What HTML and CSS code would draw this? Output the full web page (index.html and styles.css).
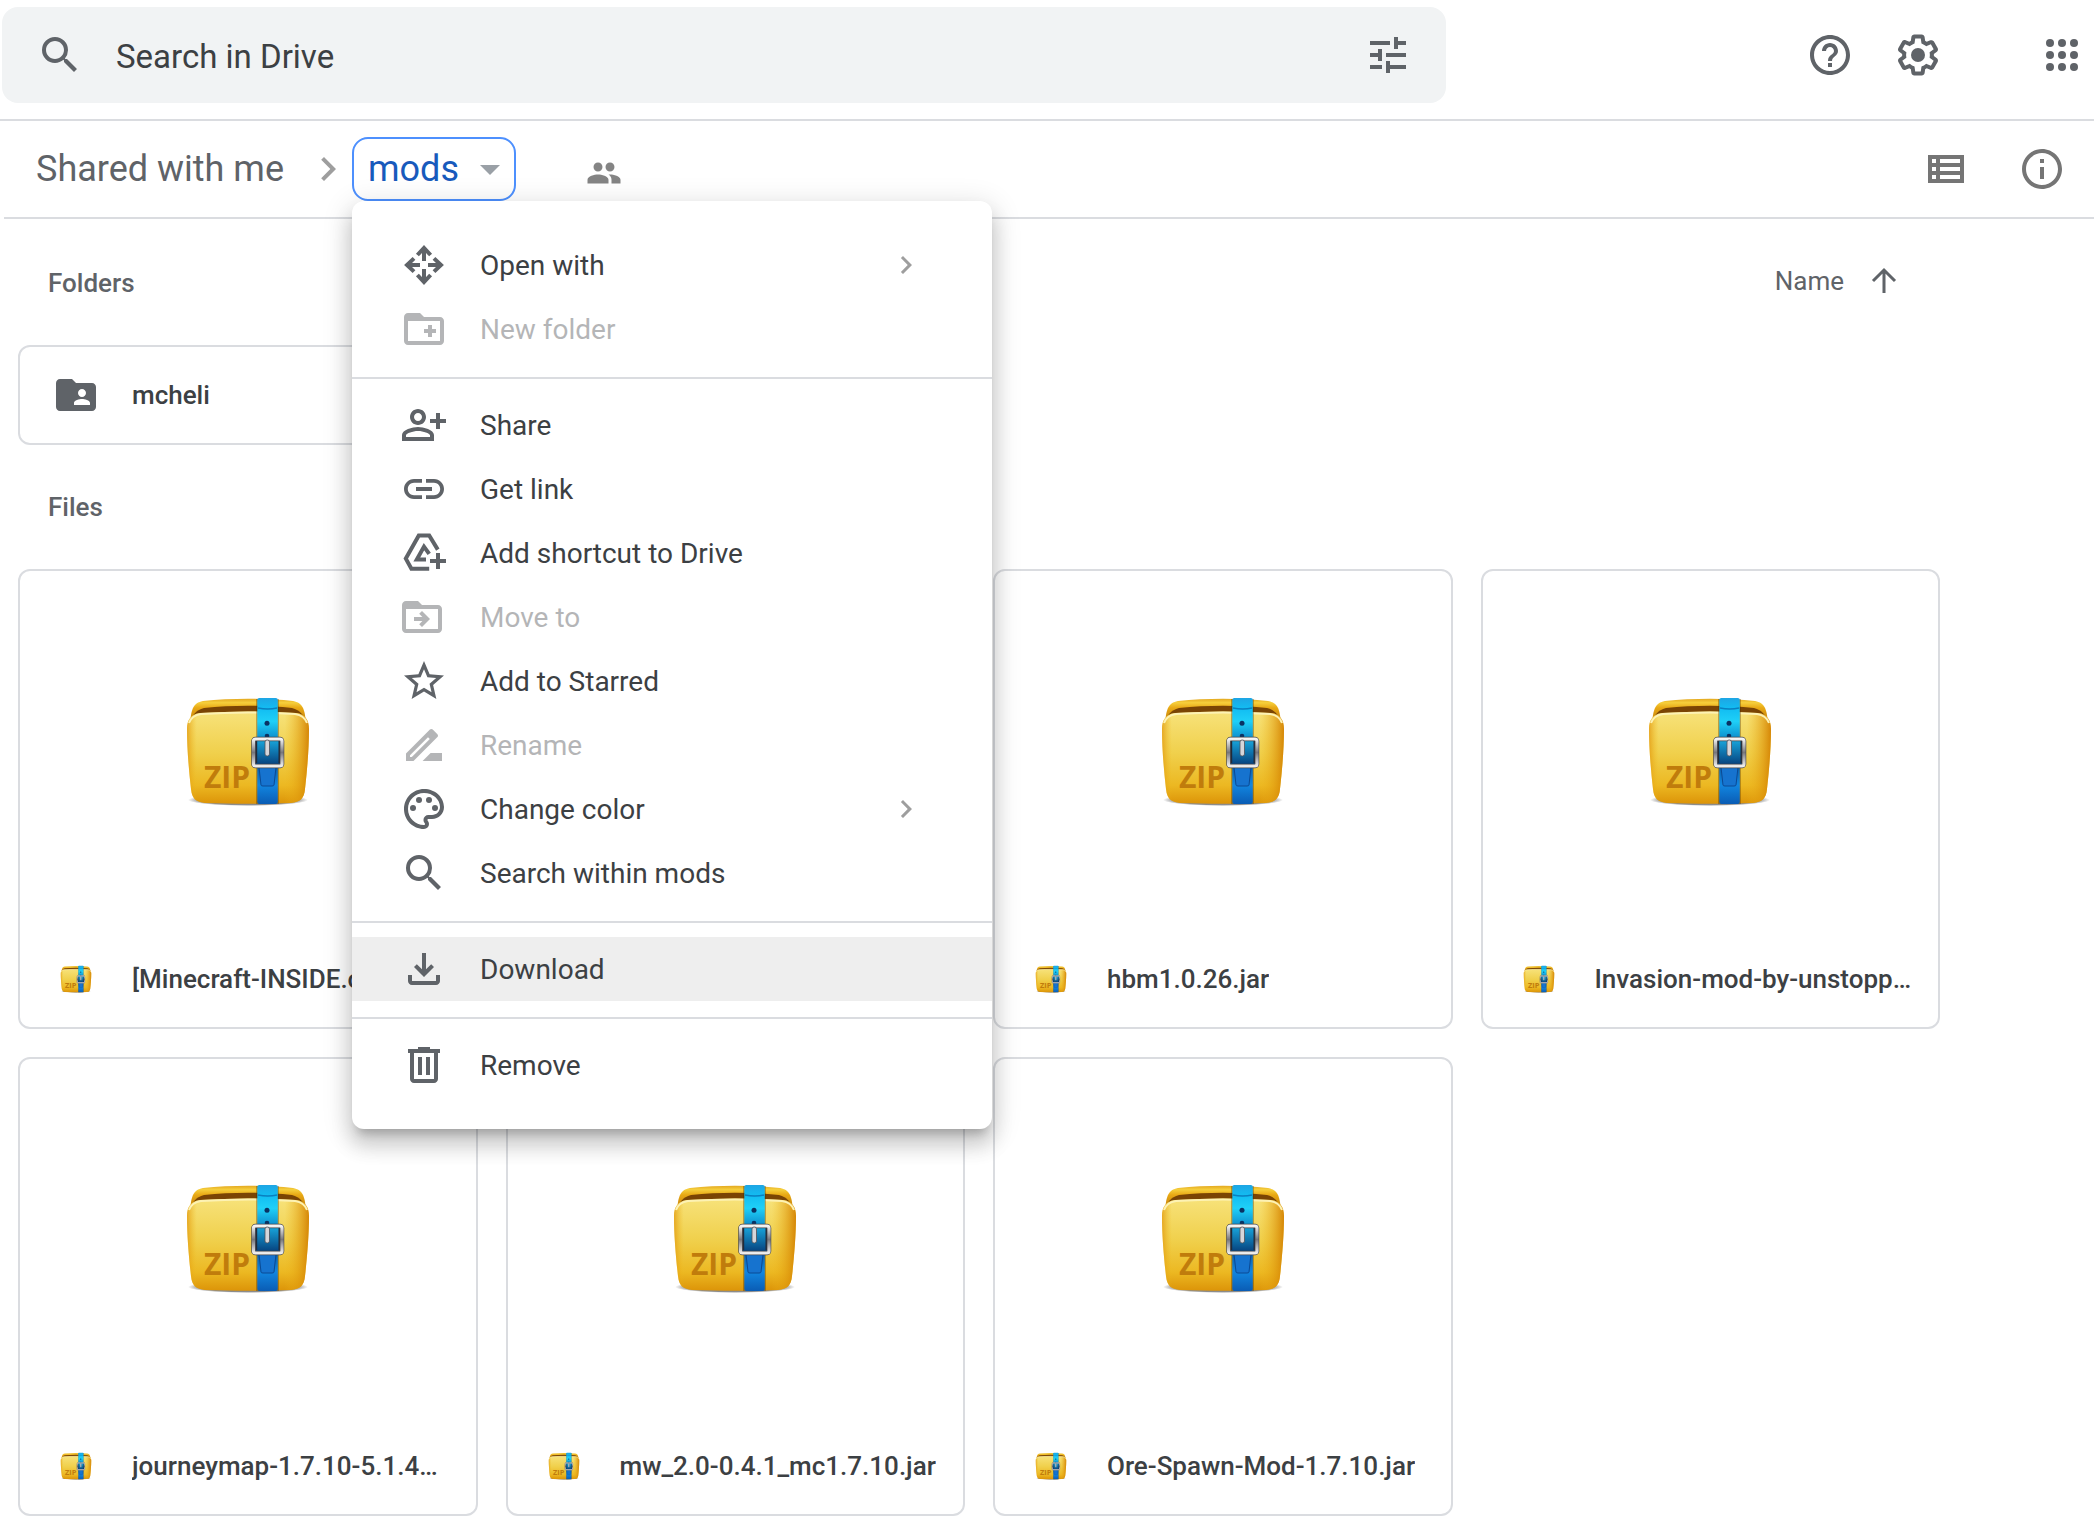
FILE: index.html
```html
<!DOCTYPE html>
<html lang="en">
<head>
<meta charset="utf-8">
<title>mods - Drive</title>
<link rel="stylesheet" href="styles.css">
</head>
<body>
<svg class="defs" aria-hidden="true">
  <defs>
    <linearGradient id="zip-front" x1="0" y1="0" x2="0" y2="1">
      <stop offset="0" stop-color="#f7e27a"/><stop offset=".45" stop-color="#f0d04c"/><stop offset=".8" stop-color="#ecb822"/><stop offset="1" stop-color="#dc9408"/>
    </linearGradient>
    <linearGradient id="zip-side" x1="0" y1="0" x2="1" y2="0">
      <stop offset="0" stop-color="#e09208" stop-opacity=".7"/><stop offset=".08" stop-color="#f0b81c" stop-opacity="0"/><stop offset=".8" stop-color="#f0b81c" stop-opacity="0"/><stop offset="1" stop-color="#d48202" stop-opacity=".95"/>
    </linearGradient>
    <linearGradient id="zip-back" x1="0" y1="0" x2="0" y2="1">
      <stop offset="0" stop-color="#e3a820"/><stop offset=".15" stop-color="#f6cf3c"/><stop offset=".35" stop-color="#e8a814"/><stop offset="1" stop-color="#b87408"/>
    </linearGradient>
    <linearGradient id="zip-strap" x1="0" y1="0" x2="0" y2="1">
      <stop offset="0" stop-color="#1ea5e4"/><stop offset=".1" stop-color="#12bdf2"/><stop offset=".22" stop-color="#1fd0f8"/><stop offset=".4" stop-color="#0b86c8"/><stop offset=".66" stop-color="#0a62b0"/><stop offset=".82" stop-color="#1286e0"/><stop offset="1" stop-color="#0a5cb4"/>
    </linearGradient>
    <linearGradient id="zip-metal" x1="0" y1="0" x2="0" y2="1">
      <stop offset="0" stop-color="#f4f4f4"/><stop offset=".5" stop-color="#77777c"/><stop offset=".7" stop-color="#a9a9ad"/><stop offset="1" stop-color="#ededed"/>
    </linearGradient>
    <linearGradient id="zip-inset" x1="0" y1="0" x2="0" y2="1">
      <stop offset="0" stop-color="#18a6dc"/><stop offset="1" stop-color="#06407c"/>
    </linearGradient>
    <radialGradient id="zip-shadow">
      <stop offset=".8" stop-color="#000" stop-opacity=".45"/><stop offset="1" stop-color="#000" stop-opacity="0"/>
    </radialGradient>
  </defs>
  <symbol id="zip" viewBox="0 0 128 128">
    <ellipse cx="64" cy="113" rx="60" ry="6" fill="url(#zip-shadow)"/>
    <path d="M6 38C7 22 9 16 19 14c28-3 62-3 90 0 10 2 12 8 13 24z" fill="url(#zip-back)"/>
    <path d="M6 37c1-8 6-14 14-16 28-3 60-3 88 0 8 2 13 8 14 16l-4 4H10z" fill="#7a4404"/>
    <path d="M3 42c0-9 4-15 13-16 32-2 64-2 96 0 9 1 13 7 13 16 0 20-2 42-4 60-1 10-5 13-14 14-30 1-56 1-86 0-9-1-13-4-14-14C5 84 3 62 3 42z" fill="url(#zip-front)"/>
    <path d="M3 42c0-9 4-15 13-16 32-2 64-2 96 0 9 1 13 7 13 16 0 20-2 42-4 60-1 10-5 13-14 14-30 1-56 1-86 0-9-1-13-4-14-14C5 84 3 62 3 42z" fill="url(#zip-side)"/>
    <path d="M5 36c2-6 6-8 12-9 31-2 63-2 94 0 6 1 10 3 12 9" fill="none" stroke="#fdf2b4" stroke-width="2"/>
    <path d="M72 12h23v105H72z" fill="#4a2c00" opacity=".35"/>
    <path d="M73.300 13q0-2 2-2h16.500q2 0 2 2v102q0 2-2 2H75.300q-2 0-2-2z" fill="url(#zip-strap)"/>
    <path d="M74 21q10 2 19 0" fill="none" stroke="#0a7fc0" stroke-width="1.500"/>
    <circle cx="83" cy="36.300" r="2.500" fill="#0a3263"/>
    <circle cx="83" cy="49" r="2.300" fill="#0a3263"/>
    <path d="M75 80h17l-2 18q0 1-2 1H79q-2 0-2-1z" fill="#1673cf" stroke="#0b4a94" stroke-width="1"/>
    <rect x="71" y="53" width="26" height="25" fill="url(#zip-inset)"/>
    <path d="M71.700 54v22M96 54v22" stroke="#222a38" stroke-width="3"/>
    <rect x="69.500" y="52" width="28.500" height="27" rx="2" fill="none" stroke="#46464a" stroke-width="4.500"/>
    <rect x="69.500" y="52" width="28.500" height="27" rx="2" fill="none" stroke="url(#zip-metal)" stroke-width="3.200"/>
    <rect x="81" y="53" width="4.500" height="16" rx="2" fill="#d6d6da" stroke="#505058" stroke-width=".8"/>
  </symbol>
  <symbol id="search" viewBox="0 0 24 24"><path d="M15.500 14h-.79l-.28-.27A6.471 6.471 0 0 0 16 9.500 6.500 6.500 0 1 0 9.500 16c1.610 0 3.090-.59 4.230-1.570l.27.28v.79l5 4.990L20.490 19l-4.990-5zm-6 0C7.010 14 5 11.990 5 9.500S7.010 5 9.500 5 14 7.010 14 9.500 11.990 14 9.500 14z"/></symbol>
  <symbol id="chevron" viewBox="0 0 24 24"><path d="M10 6L8.590 7.410 13.170 12l-4.580 4.590L10 18l6-6z"/></symbol>
</svg>

<header class="topbar">
  <form class="search" role="search">
    <button type="button" class="icon-button" aria-label="Search"><svg class="icon"><use href="#search"/></svg></button>
    <input class="search-input" type="text" placeholder="Search in Drive" aria-label="Search in Drive">
    <button type="button" class="icon-button" aria-label="Search options"><svg class="icon" viewBox="0 0 24 24"><path d="M3 17v2h6v-2H3zM3 5v2h10V5H3zm10 16v-2h8v-2h-8v-2h-2v6h2zM7 9v2H3v2h4v2h2V9H7zm14 4v-2H11v2h10zm-6-4h2V7h4V5h-4V3h-2v6z"/></svg></button>
  </form>
  <nav class="top-actions" aria-label="Account">
    <button type="button" class="icon-button" aria-label="Support"><svg class="icon" viewBox="0 0 24 24"><path d="M11 18h2v-2h-2v2zm1-16C6.480 2 2 6.480 2 12s4.480 10 10 10 10-4.480 10-10S17.520 2 12 2zm0 18c-4.410 0-8-3.590-8-8s3.590-8 8-8 8 3.590 8 8-3.590 8-8 8zm0-14c-2.210 0-4 1.790-4 4h2c0-1.100.9-2 2-2s2 .9 2 2c0 2-3 1.750-3 5h2c0-2.250 3-2.500 3-5 0-2.210-1.790-4-4-4z"/></svg></button>
    <button type="button" class="icon-button" aria-label="Settings"><svg class="icon" viewBox="0 0 24 24"><path d="M13.850 22.250h-3.700c-.74 0-1.360-.54-1.450-1.270l-.27-1.890c-.27-.14-.53-.29-.79-.46l-1.800.72c-.7.26-1.470-.03-1.810-.65L2.200 15.530c-.35-.66-.2-1.440.36-1.880l1.530-1.190c-.01-.15-.02-.3-.02-.46 0-.15.010-.31.020-.46l-1.520-1.190c-.59-.45-.74-1.260-.37-1.880l1.850-3.190c.34-.62 1.110-.9 1.790-.63l1.810.73c.26-.17.52-.32.78-.46l.27-1.910c.09-.7.71-1.250 1.440-1.250h3.700c.74 0 1.360.54 1.450 1.270l.27 1.890c.27.14.53.29.79.46l1.800-.72c.71-.26 1.480.03 1.820.65l1.840 3.180c.36.66.2 1.440-.36 1.880l-1.520 1.190c.01.15.02.3.02.46s-.01.31-.02.46l1.520 1.190c.56.45.72 1.230.37 1.860l-1.860 3.220c-.34.62-1.110.9-1.800.63l-1.800-.72c-.26.17-.52.32-.78.46l-.27 1.910c-.1.68-.72 1.220-1.460 1.220zm-3.230-2h2.760l.37-2.550.53-.22c.44-.18.88-.44 1.340-.78l.45-.34 2.380.96 1.380-2.400-2.030-1.580.07-.56c.03-.26.06-.51.06-.78s-.03-.53-.06-.78l-.07-.56 2.030-1.580-1.390-2.400-2.390.96-.45-.35c-.42-.32-.87-.58-1.330-.77l-.52-.22-.37-2.550h-2.760l-.37 2.550-.53.21c-.44.19-.88.44-1.340.79l-.45.33-2.380-.95-1.390 2.390 2.030 1.580-.07.56a7 7 0 0 0-.06.79c0 .26.020.53.060.78l.07.56-2.030 1.580 1.380 2.400 2.390-.96.45.35c.43.33.86.58 1.330.77l.53.22.38 2.550z"/><circle cx="12" cy="12" r="3.500"/></svg></button>
    <button type="button" class="icon-button apps" aria-label="Google apps"><svg class="icon" viewBox="0 0 24 24"><circle cx="6" cy="6" r="2"/><circle cx="12" cy="6" r="2"/><circle cx="18" cy="6" r="2"/><circle cx="6" cy="12" r="2"/><circle cx="12" cy="12" r="2"/><circle cx="18" cy="12" r="2"/><circle cx="6" cy="18" r="2"/><circle cx="12" cy="18" r="2"/><circle cx="18" cy="18" r="2"/></svg></button>
  </nav>
</header>

<div class="pathbar">
  <nav class="breadcrumb" aria-label="Breadcrumb">
    <a class="crumb" href="#">Shared with me</a>
    <svg class="icon crumb-chevron"><use href="#chevron"/></svg>
    <div class="crumb-menu">
      <button type="button" class="crumb-current" aria-haspopup="menu" aria-expanded="true">mods
        <svg class="icon caret" viewBox="0 0 24 24"><path d="M7 10l5 5 5-5z"/></svg></button>
      <div class="menu" role="menu">
        <div class="menu-group">
          <button type="button" class="menu-item" role="menuitem"><svg class="icon line" viewBox="0 0 24 24"><path d="M12 10V4M8.700 7L12 3.500 15.300 7M12 14v6M8.700 17l3.300 3.500 3.300-3.500M10 12H4M7 8.700L3.500 12 7 15.300M14 12h6M17 8.700l3.500 3.300-3.500 3.300"/></svg><span class="menu-label">Open with</span><svg class="icon submenu"><use href="#chevron"/></svg></button>
          <button type="button" class="menu-item" role="menuitem" disabled><svg class="icon" viewBox="0 0 24 24"><path d="M20 6h-8l-2-2H4c-1.100 0-1.990.9-1.990 2L2 18c0 1.100.9 2 2 2h16c1.100 0 2-.9 2-2V8c0-1.100-.9-2-2-2zm0 12H4V8h16v10zM14 10h2v2h2v2h-2v2h-2v-2h-2v-2h2z"/></svg><span class="menu-label">New folder</span></button>
        </div>
        <div class="menu-group">
          <button type="button" class="menu-item" role="menuitem"><svg class="icon" viewBox="0 0 24 24"><path d="M9 12c2.210 0 4-1.790 4-4s-1.790-4-4-4-4 1.790-4 4 1.790 4 4 4zm0-6c1.100 0 2 .9 2 2s-.9 2-2 2-2-.9-2-2 .9-2 2-2zm0 7c-2.670 0-8 1.340-8 4v3h16v-3c0-2.660-5.330-4-8-4zm6 5H3v-.99C3.200 16.290 6.300 15 9 15s5.800 1.290 6 2v1zM18 6h2v3h3v2h-3v3h-2v-3h-3V9h3z"/></svg><span class="menu-label">Share</span></button>
          <button type="button" class="menu-item" role="menuitem"><svg class="icon" viewBox="0 0 24 24"><path d="M3.900 12c0-1.710 1.390-3.100 3.100-3.100h4V7H7c-2.760 0-5 2.240-5 5s2.240 5 5 5h4v-1.900H7c-1.710 0-3.100-1.390-3.100-3.100zM8 13h8v-2H8v2zm9-6h-4v1.900h4c1.710 0 3.100 1.390 3.100 3.100s-1.390 3.100-3.100 3.100h-4V17h4c2.760 0 5-2.240 5-5s-2.240-5-5-5z"/></svg><span class="menu-label">Get link</span></button>
          <button type="button" class="menu-item" role="menuitem"><svg class="icon line" viewBox="0 0 24 24"><path d="M18.900 10.300L14.600 3.200H9.400L2.900 14.800 5.700 19.900H14.600M14.600 12.400L12 8.800 8.400 15.300H13M19 12v8M15 16h8"/></svg><span class="menu-label">Add shortcut to Drive</span></button>
          <button type="button" class="menu-item" role="menuitem" disabled><svg class="icon" viewBox="0 0 24 24"><path d="M19 6h-8L9 4H3C1.900 4 1 4.900 1 6v12c0 1.100.9 2 2 2h16c1.100 0 2-.9 2-2V8c0-1.100-.9-2-2-2zm0 12H3V8h16v10zM11 9l4 4-4 4-1.400-1.400L11.200 14H7v-2h4.200L9.600 10.400z"/></svg><span class="menu-label">Move to</span></button>
          <button type="button" class="menu-item" role="menuitem"><svg class="icon" viewBox="0 0 24 24"><path d="M22 9.240l-7.190-.62L12 2 9.190 8.630 2 9.240l5.460 4.730L5.820 21 12 17.270 18.180 21l-1.630-7.030L22 9.240zM12 15.400l-3.760 2.270 1-4.280-3.320-2.880 4.380-.38L12 6.100l1.710 4.040 4.380.38-3.320 2.880 1 4.280L12 15.400z"/></svg><span class="menu-label">Add to Starred</span></button>
          <button type="button" class="menu-item" role="menuitem" disabled><svg class="icon" viewBox="0 0 24 24"><path fill-rule="evenodd" d="M15.300 16l-4 4H21v-4zM18.710 8.040c.39-.39.39-1.020 0-1.410l-2.340-2.340c-.39-.39-1.020-.39-1.410 0L3 16.250V20h3.750zM5.920 18H5v-.92l9-9 .92.92z"/></svg><span class="menu-label">Rename</span></button>
          <button type="button" class="menu-item" role="menuitem"><svg class="icon" viewBox="0 0 24 24"><path d="M12 22C6.490 22 2 17.510 2 12S6.490 2 12 2s10 4.040 10 9c0 3.310-2.690 6-6 6h-1.770c-.28 0-.5.22-.5.5 0 .12.050.23.130.33.41.47.64 1.060.64 1.670A2.500 2.500 0 0 1 12 22zm0-18c-4.410 0-8 3.590-8 8s3.590 8 8 8c.28 0 .5-.22.5-.5a.54.54 0 0 0-.14-.35c-.41-.46-.63-1.050-.63-1.650a2.500 2.500 0 0 1 2.500-2.500H16c2.210 0 4-1.790 4-4 0-3.860-3.590-7-8-7z"/><circle cx="6.500" cy="11.500" r="1.500"/><circle cx="9.500" cy="7.500" r="1.500"/><circle cx="14.500" cy="7.500" r="1.500"/><circle cx="17.500" cy="11.500" r="1.500"/></svg><span class="menu-label">Change color</span><svg class="icon submenu"><use href="#chevron"/></svg></button>
          <button type="button" class="menu-item" role="menuitem"><svg class="icon"><use href="#search"/></svg><span class="menu-label">Search within mods</span></button>
        </div>
        <div class="menu-group">
          <button type="button" class="menu-item active" role="menuitem"><svg class="icon" viewBox="0 0 24 24"><path d="M18 15v3H6v-3H4v3c0 1.100.9 2 2 2h12c1.100 0 2-.9 2-2v-3h-2zM17 11l-1.410-1.410L13 12.170V4h-2v8.170L8.410 9.590 7 11l5 5 5-5z"/></svg><span class="menu-label">Download</span></button>
        </div>
        <div class="menu-group">
          <button type="button" class="menu-item" role="menuitem"><svg class="icon" viewBox="0 0 24 24"><path d="M9 3v1H4v2h1v13c0 1.100.9 2 2 2h10c1.100 0 2-.9 2-2V6h1V4h-5V3H9zM7 6h10v13H7V6zm2 2v9h2V8H9zm4 0v9h2V8h-2z"/></svg><span class="menu-label">Remove</span></button>
        </div>
      </div>
    </div>
    <svg class="people" viewBox="0 0 24 24" role="img" aria-label="Shared"><path d="M16 11c1.660 0 2.990-1.340 2.990-3S17.660 5 16 5c-1.660 0-3 1.340-3 3s1.340 3 3 3zm-8 0c1.660 0 2.990-1.340 2.990-3S9.660 5 8 5C6.340 5 5 6.340 5 8s1.340 3 3 3zm0 2c-2.330 0-7 1.170-7 3.500V19h14v-2.500c0-2.330-4.670-3.500-7-3.500zm8 0c-.29 0-.62.02-.97.05 1.160.84 1.970 1.970 1.970 3.450V19h6v-2.500c0-2.330-4.670-3.500-7-3.500z"/></svg>
  </nav>
  <div class="view-actions">
    <button type="button" class="icon-button" aria-label="List view"><svg class="icon" viewBox="0 0 24 24"><path fill-rule="evenodd" d="M3 5h18v14H3zM5 7v2h2V7zM9 7v2h10V7zM5 11v2h2v-2zM9 11v2h10v-2zM5 15v2h2v-2zM9 15v2h10v-2z"/></svg></button>
    <button type="button" class="icon-button" aria-label="View details"><svg class="icon" viewBox="0 0 24 24"><path d="M11 7h2v2h-2zm0 4h2v6h-2zm1-9C6.480 2 2 6.480 2 12s4.480 10 10 10 10-4.480 10-10S17.520 2 12 2zm0 18c-4.410 0-8-3.590-8-8s3.590-8 8-8 8 3.590 8 8-3.590 8-8 8z"/></svg></button>
  </div>
</div>

<main class="content">
  <div class="section-head">
    <h2 class="section-title">Folders</h2>
    <button type="button" class="sort">Name <svg class="sort-arrow" viewBox="0 0 32 32"><path d="M16 28V6M5 16L16 5l11 11"/></svg></button>
  </div>
  <div class="grid">
    <a class="card" href="#">
      <span class="card-footer"><svg class="icon folder-icon" viewBox="0 0 24 24"><path d="M20 6h-8l-2-2H4c-1.100 0-1.990.9-1.990 2L2 18c0 1.100.9 2 2 2h16c1.100 0 2-.9 2-2V8c0-1.100-.9-2-2-2zm-5 3c1.100 0 2 .9 2 2s-.9 2-2 2-2-.9-2-2 .9-2 2-2zm4 8h-8v-1c0-1.330 2.670-2 4-2s4 .67 4 2v1z"/></svg><span class="card-name">mcheli</span></span>
    </a>
  </div>
  <div class="section-head">
    <h2 class="section-title">Files</h2>
  </div>
  <div class="grid">
    <a class="card file" href="#"><span class="thumb"><svg class="zip" viewBox="0 0 128 128"><use href="#zip"/><text x="20" y="101" class="zip-label">ZIP</text></svg></span><span class="card-footer"><svg class="zip-small" viewBox="0 0 128 128"><use href="#zip"/><text x="20" y="101" class="zip-label">ZIP</text></svg><span class="card-name">[Minecraft-INSIDE.com]</span></span></a>
    <div class="card file"></div>
    <a class="card file" href="#"><span class="thumb"><svg class="zip" viewBox="0 0 128 128"><use href="#zip"/><text x="20" y="101" class="zip-label">ZIP</text></svg></span><span class="card-footer"><svg class="zip-small" viewBox="0 0 128 128"><use href="#zip"/><text x="20" y="101" class="zip-label">ZIP</text></svg><span class="card-name">hbm1.0.26.jar</span></span></a>
    <a class="card file" href="#"><span class="thumb"><svg class="zip" viewBox="0 0 128 128"><use href="#zip"/><text x="20" y="101" class="zip-label">ZIP</text></svg></span><span class="card-footer"><svg class="zip-small" viewBox="0 0 128 128"><use href="#zip"/><text x="20" y="101" class="zip-label">ZIP</text></svg><span class="card-name">Invasion-mod-by-unstopp…</span></span></a>
    <a class="card file" href="#"><span class="thumb"><svg class="zip" viewBox="0 0 128 128"><use href="#zip"/><text x="20" y="101" class="zip-label">ZIP</text></svg></span><span class="card-footer"><svg class="zip-small" viewBox="0 0 128 128"><use href="#zip"/><text x="20" y="101" class="zip-label">ZIP</text></svg><span class="card-name">journeymap-1.7.10-5.1.4…</span></span></a>
    <a class="card file" href="#"><span class="thumb"><svg class="zip" viewBox="0 0 128 128"><use href="#zip"/><text x="20" y="101" class="zip-label">ZIP</text></svg></span><span class="card-footer"><svg class="zip-small" viewBox="0 0 128 128"><use href="#zip"/><text x="20" y="101" class="zip-label">ZIP</text></svg><span class="card-name">mw_2.0-0.4.1_mc1.7.10.jar</span></span></a>
    <a class="card file" href="#"><span class="thumb"><svg class="zip" viewBox="0 0 128 128"><use href="#zip"/><text x="20" y="101" class="zip-label">ZIP</text></svg></span><span class="card-footer"><svg class="zip-small" viewBox="0 0 128 128"><use href="#zip"/><text x="20" y="101" class="zip-label">ZIP</text></svg><span class="card-name">Ore-Spawn-Mod-1.7.10.jar</span></span></a>
  </div>
</main>
</body>
</html>
```
FILE: styles.css
```css
* { box-sizing: border-box; }

body {
  margin: 0;
  background: #fff;
  color: #3c4043;
  font-family: Roboto, "Liberation Sans", sans-serif;
  font-size: 26px;
}

button, input {
  margin: 0;
  padding: 0;
  border: 0;
  background: none;
  color: inherit;
  font: inherit;
}

a { color: inherit; text-decoration: none; }

.defs { position: absolute; width: 0; height: 0; }

.icon {
  flex: none;
  display: block;
  width: 48px;
  height: 48px;
  fill: currentColor;
}

.line { fill: none; stroke: currentColor; stroke-width: 2; }

.icon-button { flex: none; color: #5f6368; }

/* Top bar */
.topbar {
  display: flex;
  align-items: center;
  justify-content: space-between;
  gap: 360px;
  padding: 7px 8px 16px 2px;
  border-bottom: 2px solid #dadce0;
}

.search {
  flex: 1;
  display: flex;
  align-items: center;
  gap: 32px;
  height: 96px;
  padding: 0 34px;
  border-radius: 16px;
  background: #f1f3f4;
}

.search-input {
  flex: 1;
  min-width: 0;
  height: 64px;
  padding-top: 2px;
  font-size: 33px;
  outline: none;
}

.search-input::placeholder { color: #3c4043; opacity: 1; }

.top-actions { display: flex; gap: 40px; }
.apps { margin-left: 56px; }

/* Breadcrumb bar */
.pathbar {
  display: flex;
  align-items: center;
  justify-content: space-between;
  height: 98px;
  margin-left: 4px;
  padding: 0 28px;
  border-bottom: 2px solid #dadce0;
}

.breadcrumb {
  display: flex;
  align-items: center;
  color: #5f6368;
  font-size: 36px;
}

.crumb { width: 272px; padding-left: 4px; }
.crumb-chevron { color: #9e9e9e; }
.crumb-menu { position: relative; }

.crumb-current {
  display: flex;
  align-items: center;
  justify-content: space-between;
  width: 164px;
  height: 64px;
  padding-left: 14px;
  border: 2px solid #4d90fe;
  border-radius: 16px;
  color: #185abc;
}

.caret { color: #9aa0a6; }

.people {
  width: 36px;
  height: 36px;
  margin: 8px 0 0 70px;
  fill: #848484;
}

.view-actions { display: flex; gap: 48px; }
.view-actions .icon-button { color: #757575; }

/* Context menu */
.menu {
  position: absolute;
  top: 100%;
  left: 0;
  z-index: 1;
  width: 640px;
  padding: 32px 0;
  border-radius: 12px;
  background: #fff;
  box-shadow: 0 16px 20px 2px rgba(0, 0, 0, .14), 0 6px 28px 4px rgba(0, 0, 0, .12), 0 10px 10px -6px rgba(0, 0, 0, .2);
  color: #3c4043;
  font-size: 28px;
}

.menu-group + .menu-group {
  margin-top: 16px;
  padding-top: 14px;
  border-top: 2px solid #dadce0;
}

.menu-item {
  display: flex;
  align-items: center;
  gap: 32px;
  width: 100%;
  height: 64px;
  padding: 0 68px 0 48px;
  text-align: left;
}

.menu-item .icon { color: #5f6368; }
.menu-label { flex: 1; }
.menu-item .submenu { width: 36px; height: 36px; color: #9e9e9e; }
.menu-item:disabled { opacity: .38; }
.menu-item:disabled .icon { color: #3c4043; }
.menu-item.active { background: #eee; }

/* File list */
.content { padding: 2px 154px 0 18px; }

.section-head {
  display: flex;
  align-items: center;
  justify-content: space-between;
  height: 124px;
  padding: 0 40px 0 30px;
  color: #5f6368;
}

.section-title { margin: 0; font-size: 26px; font-weight: 500; }

.sort { display: flex; align-items: center; gap: 24px; padding-bottom: 4px; font-weight: 400; }
.sort-arrow { width: 32px; height: 32px; fill: none; stroke: #5f6368; stroke-width: 3; }

.grid {
  display: grid;
  grid-template-columns: repeat(4, 1fr);
  gap: 28px;
}

.card {
  display: flex;
  flex-direction: column;
  min-width: 0;
  border: 2px solid #dadce0;
  border-radius: 12px;
}

.file { aspect-ratio: 1; }

.thumb {
  flex: 1;
  display: flex;
  align-items: center;
  justify-content: center;
}

.card-footer {
  display: flex;
  align-items: center;
  gap: 32px;
  height: 96px;
  padding: 0 24px 0 32px;
}

.card-name {
  min-width: 0;
  overflow: hidden;
  font-weight: 500;
  text-overflow: ellipsis;
  white-space: nowrap;
}

.folder-icon { color: #5f6368; }

.zip { width: 128px; height: 128px; }
.zip-small { flex: none; width: 32px; height: 32px; margin: 0 8px; }

.zip-label {
  font: 700 30px "Open Sans", sans-serif;
  fill: #c07c0c;
}
```
